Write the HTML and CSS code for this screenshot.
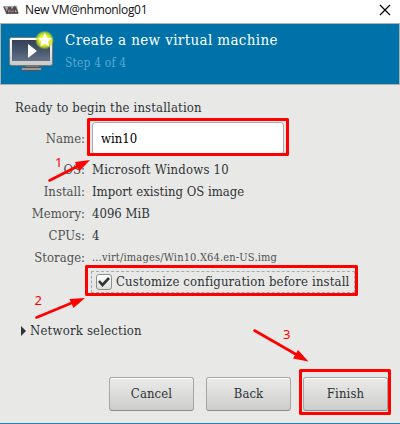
FILE: index.html
```html
<!DOCTYPE html>
<html lang="en">
<head>
<meta charset="utf-8">
<title>New VM@nhmonlog01</title>
<link rel="stylesheet" href="styles.css">
</head>
<body>
<main class="window">
  <div class="titlebar">
    <svg class="app-icon" width="16" height="10" viewBox="0 0 16 10"><path d="M0 1H14L15.500 9H3Z" fill="#aaa6a6"/><path d="M1 2l3 6 2-6M7 8V2l2 4 2-4v6M11 8l1-6 3 6M3 8H15" fill="none" stroke="#51494b" stroke-width="1.300"/><path d="M6 6h5" stroke="#a66b70"/></svg>
    <span class="title">New VM@nhmonlog01</span>
    <svg class="close" width="12" height="12" viewBox="0 0 12 12"><path d="M1 1L11 11M11 1L1 11" stroke="#000" stroke-width="1.200"/></svg>
  </div>
  <header class="banner">
    <svg class="monitor" width="46" height="42" viewBox="0 0 46 42">
      <defs>
        <linearGradient id="screen" x1="0" y1="0" x2="0" y2="1"><stop offset="0" stop-color="#344258"/><stop offset=".5" stop-color="#48566c"/><stop offset="1" stop-color="#66718a"/></linearGradient>
        <linearGradient id="frame" x1="0" y1="0" x2="0" y2="1"><stop offset="0" stop-color="#fff"/><stop offset="1" stop-color="#c9c9c9"/></linearGradient>
        <radialGradient id="glow"><stop offset="0" stop-color="#ffff50"/><stop offset=".55" stop-color="#e5ee20"/><stop offset=".8" stop-color="#c7dc20" stop-opacity=".75"/><stop offset="1" stop-color="#b8d820" stop-opacity="0"/></radialGradient>
      </defs>
      <path d="M18 34h13v5H18z" fill="#777"/>
      <rect x="13.500" y="37.500" width="20" height="3" rx="1" fill="#999" stroke="#555"/>
      <rect x="1.500" y="7.500" width="43" height="28" rx="2" fill="url(#frame)" stroke="#777"/>
      <rect x="4" y="10" width="38" height="21" fill="url(#screen)"/>
      <path d="M20 14L29 21L20 28Z" fill="#fff"/>
      <circle cx="36.500" cy="10" r="9.500" fill="url(#glow)"/>
      <path d="M36.800 3l2 4.700 5 .4-3.800 3.300 1.200 5-4.400-2.700-4.400 2.700 1.200-5-3.800-3.300 5-.4z" fill="#fff"/>
    </svg>
    <div class="headings">
      <h1>Create a new virtual machine</h1>
      <p class="step">Step 4 of 4</p>
    </div>
  </header>
  <section class="content">
    <p class="ready">Ready to begin the installation</p>
    <div class="details">
      <label class="key name-key" for="name">Name:</label>
      <input class="name" id="name" value="win10">
      <span class="key os">OS:</span><span class="value v-os">Microsoft Windows 10</span>
      <span class="key">Install:</span><span class="value tight">Import existing OS image</span>
      <span class="key">Memory:</span><span class="value tight">4096 MiB</span>
      <span class="key">CPUs:</span><span class="value">4</span>
      <span class="key">Storage:</span><span class="value path">...virt/images/Win10.X64.en-US.img</span>
    </div>
    <div class="customize">
      <span class="checkbox"><svg width="12" height="10" viewBox="0 0 12 10"><path d="M1 4L4.500 8L11 1" fill="none" stroke="#2e3436" stroke-width="2.600"/></svg></span>
      <span class="option">Customize configuration before install</span>
    </div>
    <div class="network"><svg width="5" height="10" viewBox="0 0 5 10"><path d="M0 0L5 5L0 10Z" fill="#2e3436"/></svg><span>Network selection</span></div>
    <div class="actions">
      <button>Cancel</button><button>Back</button><button>Finish</button>
    </div>
  </section>
  <svg class="annotations" width="400" height="424" viewBox="0 0 400 424">
    <g fill="none" stroke="#f00" stroke-width="3" stroke-linejoin="round" stroke-linecap="round">
      <rect x="88.500" y="119.500" width="199" height="35"/>
      <rect x="86.500" y="266.500" width="270" height="28"/>
      <rect x="300.500" y="370.500" width="89" height="43"/>
      <path d="M49.500 180.500L80 165M36.500 317.500L74 302M254.500 330.500L298 355.500" stroke-width="2.600"/>
    </g>
    <path d="M90 160L75 162L79.500 171ZM85 298L69.500 299L73.500 308ZM308.500 361.500L298 350L293 358.500Z" fill="#f00"/>
    <g class="number"><text x="55" y="167">1</text><text x="34.500" y="305">2</text><text x="283" y="339">3</text></g>
  </svg>
</main>
</body>
</html>
```
FILE: styles.css
```css
* { box-sizing: border-box; }
body { margin: 0; background: #e8e8e7; }
h1, p { margin: 0; font-weight: normal; }
.window {
  position: relative;
  display: flex;
  flex-direction: column;
  width: 400px;
  height: 424px;
  overflow: hidden;
  border-bottom: 1px solid #1883d7;
  color: #2e3436;
  font: 13px/22px "DejaVu Serif Condensed", "DejaVu Serif", serif;
  font-stretch: condensed;
  letter-spacing: .15px;
  white-space: nowrap;
}
.titlebar { display: flex; align-items: center; height: 23px; padding: 0 9px 3px 3px; background: #fff; }
.title { margin-left: 6px; color: #111; font: 12px/20px "Open Sans", sans-serif; letter-spacing: -.33px; }
.close { margin-left: auto; }
.banner { display: flex; height: 62px; border: 1px solid #b0afa8; background: #0072aa; }
.monitor { margin: 6px 0 0 7px; }
.headings { padding: 5px 0 0 11px; }
h1 { color: #fff; font-size: 15px; line-height: 22px; letter-spacing: .37px; }
.step { margin-top: 1px; color: #59a6d1; font-size: 12px; line-height: 22px; }
.content { display: flex; flex: 1; flex-direction: column; padding: 12px 12px 12px 15px; }
.details { display: grid; grid-template: 31px 28px repeat(4, 22px) / 70px 192px; column-gap: 7px; margin-top: 3px; }
.os, .v-os { margin-top: 6px; }
.key { color: #50524f; text-align: right; letter-spacing: 0; }
.name-key { line-height: 33px; }
.name { width: 192px; height: 32px; padding: 0 8px; border: 1px solid #aaa; border-radius: 3px; background: #fff; color: #000; font: inherit; letter-spacing: 0; }
.value { letter-spacing: .2px; }
.tight { letter-spacing: 0; }
.path { color: #50524f; font-size: 11px; letter-spacing: .16px; }
.customize { display: flex; align-items: center; width: 264px; height: 22px; margin: 2px 0 0 76px; padding-left: 4px; border: 1px dashed #aaa; }
.checkbox { display: grid; place-items: center; width: 16px; height: 16px; border: 1px solid #8c8f8a; border-radius: 3px; background: linear-gradient(#fff, #ddd); }
.option { margin-left: 4px; }
.network { display: flex; align-items: center; height: 22px; margin: 27px 0 0 6px; gap: 4px; letter-spacing: .2px; }
.actions { display: flex; justify-content: flex-end; gap: 12px; margin-top: auto; }
button { width: 85px; height: 34px; padding: 0; border: 1px solid #a5a7a2; border-bottom-color: #8b8d87; border-radius: 3px; background: linear-gradient(#ebebea, #cdcdcb); box-shadow: inset 0 1px #fff; color: #2e3436; font: inherit; letter-spacing: .1px; }
.annotations { position: absolute; inset: 0; pointer-events: none; }
.number { fill: #f00; font: 13px "Noto Sans", sans-serif; }
```
